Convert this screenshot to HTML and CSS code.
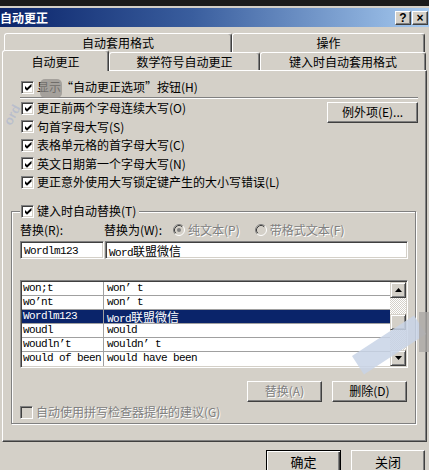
FILE: index.html
```html
<!DOCTYPE html>
<html>
<head>
<meta charset="utf-8">
<title>自动更正</title>
<link rel="stylesheet" href="styles.css">
</head>
<body>
<div class="topband"></div>
<div class="titlebar">
  <span class="title">自动更正</span>
  <div class="tbtns"><span class="tbtn">?</span><span class="tbtn">×</span></div>
</div>
<div class="tabs">
  <div class="tabrow back">
    <div class="tab t-fmt">自动套用格式</div>
    <div class="tab t-act">操作</div>
  </div>
  <div class="tabrow front">
    <div class="tab t-ac sel">自动更正</div>
    <div class="tab t-math">数学符号自动更正</div>
    <div class="tab t-type">键入时自动套用格式</div>
  </div>
</div>
<div class="panel">
  <div class="row first"><span class="cb"><svg width="9" height="9" viewBox="0 0 9 9"><polygon points="1,3 3,5 7.5,0.8 7.5,3.4 3,7.8 1,5.8" fill="#000"/></svg></span><span>显示“自动更正选项”按钮(H)</span></div>
  <div class="sep"></div>
  <div class="opts">
    <div class="optlist">
      <div class="row"><span class="cb"><svg width="9" height="9" viewBox="0 0 9 9"><polygon points="1,3 3,5 7.5,0.8 7.5,3.4 3,7.8 1,5.8" fill="#000"/></svg></span><span>更正前两个字母连续大写(O)</span></div>
      <div class="row"><span class="cb"><svg width="9" height="9" viewBox="0 0 9 9"><polygon points="1,3 3,5 7.5,0.8 7.5,3.4 3,7.8 1,5.8" fill="#000"/></svg></span><span>句首字母大写(S)</span></div>
      <div class="row"><span class="cb"><svg width="9" height="9" viewBox="0 0 9 9"><polygon points="1,3 3,5 7.5,0.8 7.5,3.4 3,7.8 1,5.8" fill="#000"/></svg></span><span>表格单元格的首字母大写(C)</span></div>
      <div class="row"><span class="cb"><svg width="9" height="9" viewBox="0 0 9 9"><polygon points="1,3 3,5 7.5,0.8 7.5,3.4 3,7.8 1,5.8" fill="#000"/></svg></span><span>英文日期第一个字母大写(N)</span></div>
      <div class="row"><span class="cb"><svg width="9" height="9" viewBox="0 0 9 9"><polygon points="1,3 3,5 7.5,0.8 7.5,3.4 3,7.8 1,5.8" fill="#000"/></svg></span><span>更正意外使用大写锁定键产生的大小写错误(L)</span></div>
    </div>
    <div class="btn exc">例外项(E)...</div>
  </div>
  <div class="group">
    <div class="gtitle"><span class="cb"><svg width="9" height="9" viewBox="0 0 9 9"><polygon points="1,3 3,5 7.5,0.8 7.5,3.4 3,7.8 1,5.8" fill="#000"/></svg></span><span>键入时自动替换(T)</span></div>
    <div class="labels">
      <span class="lab1">替换(R):</span>
      <span class="lab2">替换为(W):</span>
      <span class="radio dis"><svg width="12" height="12" viewBox="0 0 12 12"><circle cx="6" cy="6" r="5" fill="#d4d0c8"/><path d="M2.11 9.89 A5.5 5.5 0 0 1 9.89 2.11" stroke="#808080" fill="none"/><path d="M2.82 9.18 A4.5 4.5 0 0 1 9.18 2.82" stroke="#404040" fill="none"/><path d="M9.89 2.11 A5.5 5.5 0 0 1 2.11 9.89" stroke="#fff" fill="none"/><circle cx="6" cy="6" r="2" fill="#808080"/></svg><span>纯文本(P)</span></span>
      <span class="radio dis r2"><svg width="12" height="12" viewBox="0 0 12 12"><circle cx="6" cy="6" r="5" fill="#d4d0c8"/><path d="M2.11 9.89 A5.5 5.5 0 0 1 9.89 2.11" stroke="#808080" fill="none"/><path d="M2.82 9.18 A4.5 4.5 0 0 1 9.18 2.82" stroke="#404040" fill="none"/><path d="M9.89 2.11 A5.5 5.5 0 0 1 2.11 9.89" stroke="#fff" fill="none"/></svg><span>带格式文本(F)</span></span>
    </div>
    <div class="inputs">
      <div class="field f1 mono">Wordlm123</div>
      <div class="field f2 mono">Word<span class="cjk">联盟微信</span></div>
    </div>
    <div class="list">
      <div class="rows mono">
        <div class="lrow"><span class="c1">won;t</span><span class="c2">won’ t</span></div>
        <div class="lrow"><span class="c1">wo’nt</span><span class="c2">won’ t</span></div>
        <div class="lrow selrow"><span class="c1">Wordlm123</span><span class="c2">Word<span class="cjk">联盟微信</span></span></div>
        <div class="lrow"><span class="c1">woudl</span><span class="c2">would</span></div>
        <div class="lrow"><span class="c1">woudln’t</span><span class="c2">wouldn’ t</span></div>
        <div class="lrow last"><span class="c1">would of been</span><span class="c2">would have been</span></div>
      </div>
      <div class="sb">
        <div class="sbbtn"><svg width="7" height="4" viewBox="0 0 7 4"><polygon points="0,4 7,4 3.5,0" fill="#000"/></svg></div>
        <div class="thumb"></div>
        <div class="sbbtn down"><svg width="7" height="4" viewBox="0 0 7 4"><polygon points="0,0 7,0 3.5,4" fill="#000"/></svg></div>
      </div>
    </div>
    <div class="actions">
      <div class="btn act dis">替换(A)</div>
      <div class="btn act">删除(D)</div>
    </div>
    <div class="row spell dis"><span class="cb off"></span><span>自动使用拼写检查器提供的建议(G)</span></div>
  </div>
</div>
<div class="footer">
  <div class="btn fbtn ok">确定</div>
  <div class="btn fbtn">关闭</div>
</div>
<div class="wm-blob"></div>
<div class="wm-word">ord</div>
<div class="wm-stripe"></div>
<div class="wm-block"></div>
</body>
</html>
```
FILE: styles.css
```css
html, body {
  margin: 0;
  padding: 0;
}
body {
  width: 429px;
  height: 470px;
  overflow: hidden;
  position: relative;
  background: #d4d0c8;
  color: #000;
  font-family: "Noto Sans CJK SC", "Liberation Sans", sans-serif;
  font-size: 12px;
  line-height: 14px;
}

.topband {
  height: 6px;
  background: #1b1b1b;
}
.titlebar {
  margin-top: 2px;
  height: 19px;
  background: linear-gradient(90deg, #0a246a 0%, #3a5e9e 45%, #a6caf0 100%);
  display: flex;
  align-items: center;
  justify-content: space-between;
}
.title {
  color: #fff;
  font-weight: bold;
  font-size: 12px;
  line-height: 14px;
}
.tbtns {
  display: flex;
  gap: 1px;
  margin-right: 1px;
  margin-top: 1px;
}
.tbtn {
  width: 16px;
  height: 14px;
  box-sizing: border-box;
  border: 1px solid;
  border-color: #fff #404040 #404040 #fff;
  box-shadow: inset -1px -1px #808080;
  background: #d4d0c8;
  font-family: "Liberation Sans", sans-serif;
  font-weight: bold;
  font-size: 12px;
  line-height: 12px;
  text-align: center;
}

.tabs {
  margin-top: 6px;
}
.tabrow {
  display: flex;
  align-items: flex-end;
}
.back {
  margin-left: 4px;
  height: 19px;
}
.front {
  margin-left: 2px;
  height: 18px;
}
.tab {
  box-sizing: border-box;
  border: 1px solid;
  border-bottom: none;
  border-color: #fff #404040 transparent #fff;
  box-shadow: inset -1px 0 #808080;
  border-radius: 3px 3px 0 0;
  background: #d4d0c8;
  text-align: center;
}
.back .tab {
  height: 19px;
  padding-top: 2px;
}
.front .tab {
  height: 18px;
  padding-top: 2px;
}
.front .sel {
  height: 21px;
  padding-top: 4px;
  margin-bottom: -1px;
  position: relative;
  z-index: 1;
}
.t-fmt { width: 228px; }
.t-act { width: 193px; }
.t-ac { width: 107px; }
.t-math { width: 151px; }
.t-type { width: 166px; }

.panel {
  margin-left: 2px;
  width: 425px;
  height: 372px;
  box-sizing: border-box;
  border: 1px solid;
  border-color: #fff #404040 #404040 #fff;
  box-shadow: inset -1px -1px #808080;
  padding: 7px 8px 0 18px;
}
.row {
  display: flex;
  align-items: center;
  gap: 3px;
  height: 18px;
  white-space: nowrap;
}
.optlist .row {
  height: 18.5px;
}
.cb {
  width: 13px;
  height: 13px;
  box-sizing: border-box;
  border: 1px solid;
  border-color: #808080 #fff #fff #808080;
  box-shadow: inset 1px 1px #404040, inset -1px -1px #d4d0c8;
  background: #fff;
  display: flex;
  align-items: center;
  justify-content: center;
  flex-shrink: 0;
}
.cb svg {
  display: block;
  margin: 1px 0 0 1px;
}
.cb.off {
  background: #d4d0c8;
}
.sep {
  margin: 1px 0 0 -1px;
  border-top: 1px solid #808080;
  border-bottom: 1px solid #fff;
}
.opts {
  display: flex;
}
.btn {
  box-sizing: border-box;
  border: 1px solid;
  border-color: #fff #404040 #404040 #fff;
  box-shadow: inset -1px -1px #808080;
  background: #d4d0c8;
  text-align: center;
  white-space: nowrap;
}
.exc {
  margin-left: auto;
  margin-top: 3px;
  width: 91px;
  height: 21px;
  padding-top: 2px;
}
.dis {
  color: #808080;
  text-shadow: 1px 1px 0 #fff;
}

.group {
  margin: 19.5px 2px 0 -10px;
  border: 1px solid #808080;
  box-shadow: inset 1px 1px 0 #fff, 1px 1px 0 #fff;
  padding: 0 7px 4px 8px;
}
.gtitle {
  display: flex;
  align-items: center;
  gap: 3px;
  width: fit-content;
  height: 14px;
  margin-top: -8px;
  padding: 0 3px 0 1px;
  background: #d4d0c8;
}
.labels {
  margin-top: 5px;
  height: 14px;
  display: flex;
  align-items: center;
  white-space: nowrap;
}
.lab1 {
  width: 84px;
}
.lab2 {
  width: 69px;
}
.radio {
  display: flex;
  align-items: center;
  gap: 3px;
}
.radio svg {
  display: block;
}
.r2 {
  margin-left: 15px;
}
.mono {
  font-family: "Liberation Mono", "Noto Sans CJK SC", monospace;
  font-size: 11px;
  letter-spacing: -0.6px;
}
.cjk {
  font-family: "Noto Sans CJK SC", sans-serif;
  font-size: 12px;
  letter-spacing: 0;
}
.inputs {
  margin-top: 4px;
  display: flex;
  gap: 1px;
  height: 18px;
}
.field {
  box-sizing: border-box;
  height: 18px;
  border: 1px solid;
  border-color: #808080 #fff #fff #808080;
  box-shadow: inset 1px 1px #404040, inset -1px -1px #d4d0c8;
  background: #fff;
  padding: 2px 0 0 3px;
  line-height: 14px;
  white-space: nowrap;
}
.f1 {
  width: 84px;
}
.f2 {
  flex: 1;
}

.list {
  margin-top: 21px;
  height: 88px;
  box-sizing: border-box;
  border: 1px solid;
  border-color: #808080 #fff #fff #808080;
  box-shadow: inset 1px 1px #404040, inset -1px -1px #d4d0c8;
  padding: 1px 1px 1px 1px;
  background: #fff;
  display: flex;
}
.rows {
  flex: 1;
  display: flex;
  flex-direction: column;
}
.lrow {
  height: 14px;
  box-sizing: border-box;
  border-bottom: 1px solid #a0a0a0;
  display: grid;
  grid-template-columns: 82px 1fr;
  line-height: 13px;
  white-space: nowrap;
}
.lrow.last {
  border-bottom: none;
}
.c1 {
  box-sizing: border-box;
  border-right: 1px solid #a0a0a0;
  padding-left: 1px;
  overflow: hidden;
}
.c2 {
  padding-left: 3px;
}
.selrow {
  background: #0a246a;
  color: #fff;
}
.sb {
  width: 16px;
  display: flex;
  flex-direction: column;
  background: repeating-conic-gradient(#fff 0 25%, #d4d0c8 0 50%) 0 0 / 2px 2px;
}
.sbbtn, .thumb {
  height: 16px;
  box-sizing: border-box;
  border: 1px solid;
  border-color: #d4d0c8 #404040 #404040 #d4d0c8;
  box-shadow: inset 1px 1px #fff, inset -1px -1px #808080;
  background: #d4d0c8;
}
.sbbtn {
  display: flex;
  align-items: center;
  justify-content: center;
}
.sbbtn svg {
  display: block;
}
.thumb {
  margin-top: 16px;
}
.down {
  margin-top: auto;
}

.actions {
  margin-top: 13px;
  display: flex;
  justify-content: flex-end;
  gap: 10px;
  padding-right: 1px;
}
.act {
  width: 75px;
  height: 21px;
  padding-top: 2px;
}
.spell {
  margin-top: 3px;
  height: 14px;
}

.footer {
  margin-top: 8px;
  display: flex;
  justify-content: flex-end;
  gap: 10px;
  padding-right: 4px;
}
.fbtn {
  width: 74px;
  height: 23px;
  padding-top: 4px;
  font-size: 13px;
}
.ok {
  width: 75px;
  border: 1px solid #000;
  box-shadow: inset 1px 1px #fff, inset -1px -1px #404040, inset -2px -2px #808080;
}

.wm-blob {
  position: absolute;
  left: 40px;
  top: 79px;
  width: 22px;
  height: 19px;
  border-radius: 5px;
  background: rgba(150, 146, 142, 0.75);
}
.wm-word {
  position: absolute;
  left: 2px;
  top: 108px;
  transform: rotate(-62deg);
  font-family: "Liberation Sans", sans-serif;
  font-weight: bold;
  font-size: 13px;
  line-height: 14px;
  color: rgba(90, 130, 220, 0.22);
}
.wm-stripe {
  position: absolute;
  left: 352px;
  top: 334px;
  width: 74px;
  height: 22px;
  transform: rotate(-33deg);
  background: rgba(200, 212, 230, 0.85);
}
.wm-block {
  position: absolute;
  left: 419px;
  top: 312px;
  width: 10px;
  height: 40px;
  background: rgba(170, 168, 165, 0.8);
}
```
